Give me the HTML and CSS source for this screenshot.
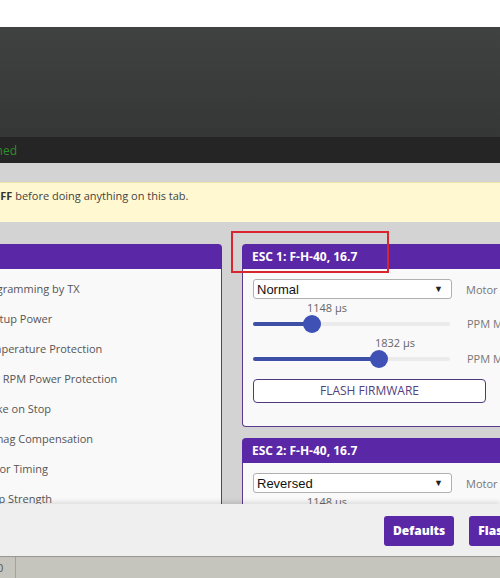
FILE: index.html
```html
<!DOCTYPE html>
<html>
<head>
<meta charset="utf-8">
<link rel="stylesheet" href="styles.css">
</head>
<body>
<div class="page">
  <div class="topband"></div>
  <div class="header"></div>
  <div class="logbar"><div class="logclip"><span class="logtext">Serial port opened</span></div></div>
  <div class="spacer"></div>
  <div class="note"><span class="notetext"><b>OFF</b> before doing anything on this tab.</span></div>
  <div class="content">
    <div class="panel left">
      <div class="phead"></div>
      <div class="pbody rows">
        <div class="row">Programming by TX</div>
        <div class="row">Startup Power</div>
        <div class="row">Temperature Protection</div>
        <div class="row">Low RPM Power Protection</div>
        <div class="row">Brake on Stop</div>
        <div class="row">Demag Compensation</div>
        <div class="row">Motor Timing</div>
        <div class="row">Beep Strength</div>
      </div>
    </div>
    <div class="col">
      <div class="panel esc">
        <div class="phead">ESC 1: F-H-40, 16.7</div>
        <div class="pbody">
          <div class="line">
            <div class="select"><span>Normal</span><span class="arrow">▼</span></div>
            <div class="side">Motor Direction</div>
          </div>
          <div class="line slider-line first">
            <div class="slider">
              <div class="val"><span class="vlabel" style="left:54px">1148 µs</span></div>
              <div class="track"><div class="fill" style="width:59px"></div><div class="thumb" style="left:59px"></div></div>
            </div>
            <div class="side trackside">PPM Min Throttle</div>
          </div>
          <div class="line slider-line">
            <div class="slider">
              <div class="val"><span class="vlabel" style="left:122px">1832 µs</span></div>
              <div class="track"><div class="fill" style="width:126px"></div><div class="thumb" style="left:126px"></div></div>
            </div>
            <div class="side trackside">PPM Max Throttle</div>
          </div>
          <div class="flash">FLASH FIRMWARE</div>
        </div>
      </div>
      <div class="panel esc second">
        <div class="phead">ESC 2: F-H-40, 16.7</div>
        <div class="pbody">
          <div class="line">
            <div class="select"><span>Reversed</span><span class="arrow">▼</span></div>
            <div class="side">Motor Direction</div>
          </div>
          <div class="line slider-line first">
            <div class="slider">
              <div class="val"><span class="vlabel" style="left:54px">1148 µs</span></div>
              <div class="track"><div class="fill" style="width:59px"></div><div class="thumb" style="left:59px"></div></div>
            </div>
            <div class="side trackside">PPM Min Throttle</div>
          </div>
        </div>
      </div>
    </div>
    <div class="highlight"></div>
  </div>
  <div class="toolbar">
    <div class="btn">Defaults</div>
    <div class="btn">Flash All</div>
  </div>
  <div class="statusbar">
    <div class="scell">0</div>
    <div class="scell rest"></div>
  </div>
</div>
</body>
</html>
```
FILE: styles.css
```css
* { box-sizing: border-box; }
html, body { margin: 0; padding: 0; }
body {
  width: 500px;
  height: 578px;
  overflow: hidden;
  font-family: "Open Sans", "DejaVu Sans", sans-serif;
  background: #ffffff;
}
.page {
  width: 500px;
  height: 578px;
  display: flex;
  flex-direction: column;
  overflow: hidden;
}
.topband { height: 27px; background: #ffffff; flex: none; }
.header {
  height: 110px;
  flex: none;
  background: linear-gradient(#404141, #353736);
}
.logbar {
  height: 26px;
  flex: none;
  background: #252525;
  display: flex;
  align-items: center;
}
.logclip {
  width: 17px;
  overflow: hidden;
  display: flex;
  justify-content: flex-end;
  white-space: nowrap;
}
.logtext { color: #2f8f2a; font-size: 12px; }
.spacer { height: 19px; flex: none; background: #d3d3d3; }
.note {
  height: 40px;
  flex: none;
  background: #fff8d0;
  border-top: 1px solid #eee4ad;
  padding-top: 5px;
  font-size: 11px;
  color: #444;
  white-space: nowrap;
  overflow: hidden;
}
.notetext { display: inline-block; margin-left: -8.5px; }
.notetext b { color: #333; }
.content {
  height: 282px;
  flex: none;
  background: #d3d3d3;
  display: flex;
  align-items: flex-start;
  gap: 20px;
  padding-top: 22px;
  overflow: hidden;
  position: relative;
}
.panel { flex: none; }
.phead {
  height: 25px;
  background: #5a27a7;
  border-radius: 4px 4px 0 0;
  color: #fff;
  font-weight: 700;
  font-size: 12px;
  line-height: 25px;
  padding-left: 10px;
  white-space: nowrap;
}
.pbody {
  background: #f9f9f9;
  border: 1px solid #5a3a8e;
  border-top: none;
  border-radius: 0 0 4px 4px;
}
.left { width: 262px; margin-left: -40px; }
.rows { padding: 5px 0 0 18px; height: 300px; }
.row {
  height: 30px;
  line-height: 30px;
  font-size: 11px;
  color: #555;
  white-space: nowrap;
}
.col { width: 340px; flex: none; display: flex; flex-direction: column; gap: 11px; }
.esc .pbody { padding: 10px 0 23px 10px; }
.line { display: flex; align-items: center; gap: 14px; }
.select {
  flex: none;
  width: 199px;
  height: 20px;
  border: 1px solid #b0b0b0;
  border-radius: 3px;
  background: #fff;
  font-family: "Liberation Sans", Arial, sans-serif;
  font-size: 13px;
  color: #111;
  display: flex;
  align-items: center;
  justify-content: space-between;
  padding: 0 8px 0 3px;
}
.arrow { font-size: 9px; color: #222; }
.side { font-size: 11px; color: #777; white-space: nowrap; flex: none; }
.slider-line { align-items: flex-end; margin-top: 2px; }
.slider-line.first { margin-top: 1px; }
.slider { width: 199px; flex: none; }
.val { position: relative; height: 15px; }
.vlabel {
  position: absolute;
  top: 0;
  font-size: 11px;
  line-height: 15px;
  color: #666;
  white-space: nowrap;
}
.track {
  position: relative;
  height: 18px;
  width: 197px;
}
.track::before {
  content: "";
  position: absolute;
  left: 0; right: 0; top: 7px;
  height: 4px;
  background: #ebebeb;
  border-radius: 2px;
}
.fill {
  position: absolute;
  left: 0; top: 7px;
  height: 4px;
  background: #3e4fa6;
  border-radius: 2px;
}
.thumb {
  position: absolute;
  top: 0;
  width: 18px;
  height: 18px;
  margin-left: -9px;
  border-radius: 50%;
  background: #3f51b5;
}
.trackside { line-height: 18px; height: 18px; margin-left: 1px; }
.flash {
  margin-top: 11px;
  width: 233px;
  height: 24px;
  border: 1px solid #51397d;
  border-radius: 4px;
  background: #fff;
  color: #553f80;
  font-size: 12px;
  line-height: 22px;
  text-align: center;
}
.highlight {
  position: absolute;
  left: 231px;
  top: 9px;
  width: 158px;
  height: 42px;
  border: 2px solid #d8252e;
}
.toolbar {
  height: 52px;
  flex: none;
  background: #efefef;
  box-shadow: 0 -2px 5px rgba(0,0,0,0.12);
  position: relative;
  display: flex;
  gap: 15px;
  padding: 12px 0 0 384px;
  white-space: nowrap;
  overflow: hidden;
}
.btn {
  flex: none;
  height: 30px;
  padding: 0 9px;
  background: #5a27a7;
  border-radius: 3px;
  color: #fff;
  font-weight: 800;
  font-size: 12px;
  line-height: 30px;
}
.statusbar {
  height: 22px;
  flex: none;
  background: #c5c5bd;
  border-top: 1px solid #9c9c96;
  display: flex;
}
.scell {
  width: 16px;
  border-right: 1px solid #a3a39c;
  font-size: 11px;
  line-height: 21px;
  color: #555;
  text-indent: -3px;
  overflow: hidden;
}
.scell.rest { flex: 1; border-right: none; }
```
